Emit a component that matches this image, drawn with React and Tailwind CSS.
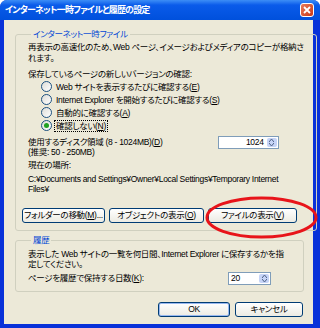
import React from 'react'

const font = { fontFamily: '"Liberation Sans", "Noto Sans CJK JP", sans-serif', fontFeatureSettings: '"palt"' }

function U({ children }) {
  return <span className="underline underline-offset-[1px]">{children}</span>
}

function Radio({ checked, focus, children }) {
  return (
    <div className="flex items-center h-[13px]">
      <span className="w-[11px] h-[11px] rounded-full border border-[#1C5180] bg-linear-to-br from-[#DCDCD7] to-white flex items-center justify-center shrink-0">
        {checked && <span className="w-[5px] h-[5px] rounded-full bg-[#21A121]" />}
      </span>
      <span className={'ml-[3px] px-[1px] leading-[10px] ' + (focus ? 'outline outline-1 outline-dotted outline-black' : '')}>
        {children}
      </span>
    </div>
  )
}

function Spinner({ value, right, width }) {
  return (
    <div className={'h-[13px] border border-[#7F9DB9] bg-white flex ' + width}>
      <div className={'flex-1 flex items-center px-[2px] leading-none ' + (right ? 'justify-end' : '')}>{value}</div>
      <div className="w-[10px] m-[1px] bg-[#C6D4F7] rounded-[2px] flex flex-col items-center justify-center gap-[1px]">
        <svg width="5" height="3" viewBox="0 0 5 3"><path d="M0 3 L2.5 0 L5 3" fill="none" stroke="#4D6185" strokeWidth="1" /></svg>
        <svg width="5" height="3" viewBox="0 0 5 3"><path d="M0 0 L2.5 3 L5 0" fill="none" stroke="#4D6185" strokeWidth="1" /></svg>
      </div>
    </div>
  )
}

function Button({ children, className }) {
  return (
    <div className={'h-[15px] border border-[#003C74] rounded-[3px] bg-linear-to-b from-white to-[#ECEBE3] flex items-center justify-center whitespace-nowrap ' + className}>
      {children}
    </div>
  )
}

export default function App() {
  return (
    <div className="relative w-[320px] h-[328px] bg-[#0831D9] rounded-t-[7px] flex flex-col overflow-hidden text-black" style={font}>
      {/* title bar */}
      <div className="h-[20px] bg-linear-to-b from-[#3C8DF6] via-[#0A5BEA] via-25% to-[#0050DC] flex items-center pl-[5px] pr-[6px]">
        <span className="text-white font-bold text-[9px] leading-none tracking-[-0.8px]">インターネット一時ファイルと履歴の設定</span>
        <div className="ml-auto w-[14px] h-[14px] rounded-[3px] border border-white bg-linear-to-br from-[#E87A5A] to-[#C8350E] flex items-center justify-center">
          <svg width="8" height="8" viewBox="0 0 8 8"><path d="M1 1 L7 7 M7 1 L1 7" stroke="white" strokeWidth="1.8" /></svg>
        </div>
      </div>

      {/* body */}
      <div className="flex-1 ml-[4px] mr-[7px] mb-[4px] bg-[#ECE9D8] pl-[11px] pr-[9px] pt-[9px] text-[8.5px] leading-[11px] tracking-[-0.3px]">
        <fieldset className="border border-[#D0D0BF] rounded-[3px] pl-[12px] pr-[12px] pb-[7px]">
          <legend className="ml-[3px] px-[2px] text-[#0046D5]">インターネット一時ファイル</legend>
          <p className="mt-[2px] whitespace-nowrap">
            再表示の高速化のため、Web ページ、イメージおよびメディアのコピーが格納さ<br />れます。
          </p>
          <p className="mt-[5px]">保存しているページの新しいバージョンの確認:</p>
          <div className="ml-[13px] flex flex-col">
            <Radio>Web サイトを表示するたびに確認する(<U>E</U>)</Radio>
            <Radio>Internet Explorer を開始するたびに確認する(<U>S</U>)</Radio>
            <Radio>自動的に確認する(<U>A</U>)</Radio>
            <Radio checked focus>確認しない(<U>N</U>)</Radio>
          </div>
          <div className="mt-[5px] flex items-start pr-[25px]">
            <p className="leading-[10px]">
              使用するディスク領域 (8 - 1024MB)(<U>D</U>)<br />(推奨: 50 - 250MB)
            </p>
            <div className="ml-auto -mt-[1px]">
              <Spinner value="1024" right width="w-[61px]" />
            </div>
          </div>
          <p className="mt-[3px]">現在の場所:</p>
          <p className="mt-[3px] leading-[10px] whitespace-nowrap">
            C:¥Documents and Settings¥Owner¥Local Settings¥Temporary Internet<br />Files¥
          </p>
          <div className="mt-[14px] -ml-[6px] flex gap-[4px]">
            <Button className="w-[83px]">フォルダーの移動(<U>M</U>)...</Button>
            <Button className="w-[95px]">オブジェクトの表示(<U>O</U>)</Button>
            <Button className="w-[89px]">ファイルの表示(<U>V</U>)</Button>
          </div>
        </fieldset>

        <fieldset className="mt-[4px] border border-[#D0D0BF] rounded-[3px] pl-[12px] pr-[12px] pb-[6px]">
          <legend className="ml-[3px] px-[2px] text-[#0046D5]">履歴</legend>
          <p className="mt-[3px] leading-[10px] whitespace-nowrap">
            表示した Web サイトの一覧を何日間、Internet Explorer に保存するかを指<br />定してください。
          </p>
          <div className="mt-[3px] flex items-center pr-[20px]">
            <p>ページを履歴で保持する日数(<U>K</U>):</p>
            <div className="ml-auto">
              <Spinner value="20" width="w-[43px]" />
            </div>
          </div>
        </fieldset>

        <div className="mt-[10px] flex justify-end gap-[5px] pr-[1px]">
          <Button className="w-[72px] shadow-[inset_0_0_0_1px_#98B8F0]">OK</Button>
          <Button className="w-[68px]">キャンセル</Button>
        </div>
      </div>

      {/* red annotation ellipse */}
      <svg className="absolute left-[205px] top-[196px]" width="113" height="43" viewBox="0 0 113 43">
        <ellipse cx="56.5" cy="21.5" rx="54.5" ry="19.5" fill="none" stroke="#E8141A" strokeWidth="3" />
      </svg>
    </div>
  )
}
